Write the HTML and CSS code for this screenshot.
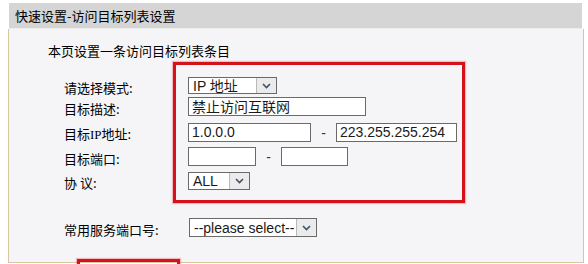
FILE: index.html
```html
<!DOCTYPE html>
<html lang="zh-CN">
<head>
<meta charset="utf-8">
<title>快速设置-访问目标列表设置</title>
<link rel="stylesheet" href="styles.css">
</head>
<body>
<div class="page">
  <div class="title-bar">快速设置-访问目标列表设置</div>
  <div class="panel">
    <div class="intro">本页设置一条访问目标列表条目</div>
    <div class="form">
      <div class="row r1">
        <div class="label">请选择模式:</div>
        <div class="select w-mode"><span class="sel-text">IP 地址</span><span class="arrow"><svg width="9" height="6" viewBox="0 0 9 6"><path d="M1 1 L4.5 4.5 L8 1" fill="none" stroke="#3f5068" stroke-width="1.6"/></svg></span></div>
      </div>
      <div class="row r2">
        <div class="label">目标描述:</div>
        <div class="input w-desc">禁止访问互联网</div>
      </div>
      <div class="row r3">
        <div class="label">目标<span class="ser">IP</span>地址:</div>
        <div class="input w-ip">1.0.0.0</div>
        <span class="dash">-</span>
        <div class="input w-ip2">223.255.255.254</div>
      </div>
      <div class="row r4">
        <div class="label">目标端口:</div>
        <div class="input w-port"></div>
        <span class="dash">-</span>
        <div class="input w-port2"></div>
      </div>
      <div class="row r5">
        <div class="label">协 议:</div>
        <div class="select w-proto"><span class="sel-text">ALL</span><span class="arrow"><svg width="9" height="6" viewBox="0 0 9 6"><path d="M1 1 L4.5 4.5 L8 1" fill="none" stroke="#3f5068" stroke-width="1.6"/></svg></span></div>
      </div>
      <div class="row r6">
        <div class="label">常用服务端口号:</div>
        <div class="select w-svc"><span class="sel-text">--please select--</span><span class="arrow"><svg width="9" height="6" viewBox="0 0 9 6"><path d="M1 1 L4.5 4.5 L8 1" fill="none" stroke="#3f5068" stroke-width="1.6"/></svg></span></div>
      </div>
    </div>
  </div>
</div>
<div class="mark mark-main"></div>
<div class="mark mark-bottom"></div>
</body>
</html>
```

FILE: styles.css
```css
html, body {
  margin: 0;
  padding: 0;
  width: 588px;
  height: 264px;
  overflow: hidden;
  background: #ffffff;
}
body {
  position: relative;
  font-family: "Noto Sans CJK SC", "Liberation Sans", sans-serif;
  color: #000;
}
.page {
  padding: 3px 0 0 8px;
  width: 576px;
}
.title-bar {
  height: 26px;
  line-height: 26px;
  margin-right: 2px;
  margin-left: 1px;
  padding-left: 6px;
  background: #d5d5d5;
  font-size: 13px;
  color: #000;
  border-bottom: 1px solid #ececec;
  box-sizing: border-box;
}
.panel {
  height: 234px;
  box-sizing: border-box;
  background: #f5f5f7;
  border-left: 1px solid #d8c6a2;
  border-right: 1px solid #d8c6a2;
  border-bottom: 1px solid #d8c6a2;
  padding: 14px 0 0 39px;
}
.intro {
  font-size: 13px;
  line-height: 15px;
  height: 15px;
  color: #000;
}
.form {
  padding-left: 16px;
  padding-top: 19px;
}
.row {
  display: flex;
  align-items: center;
}
.r1 { height: 17px; }
.r2 { height: 19px; margin-top: 3px; }
.r3 { height: 19px; margin-top: 7px; }
.r4 { height: 19px; margin-top: 5px; }
.r5 { height: 18px; margin-top: 6px; }
.r6 { height: 19px; margin-top: 28px; }
.label {
  width: 124px;
  flex: none;
  font-size: 13px;
  line-height: 15px;
  padding-top: 3px;
  color: #000;
  white-space: nowrap;
}
.ser {
  font-family: "Liberation Serif", serif;
  font-size: 13px;
}
.input, .select {
  height: 100%;
  box-sizing: border-box;
  border: 1px solid #6a6a6a;
  background: #ffffff;
  font-family: "Liberation Sans", "Noto Sans CJK SC", sans-serif;
  font-size: 14px;
  color: #1a1a1a;
  display: flex;
  align-items: center;
  padding-left: 3px;
  white-space: nowrap;
  overflow: hidden;
  flex: none;
}
.input { line-height: 17px; }
.w-desc { width: 178px; font-family: "Noto Sans CJK SC", sans-serif; font-size: 14px; }
.w-ip { width: 123px; }
.w-ip2 { width: 121px; }
.w-port { width: 68px; }
.w-port2 { width: 67px; }
.dash {
  width: 25px;
  flex: none;
  text-align: center;
  font-family: "Liberation Sans", sans-serif;
  font-size: 14px;
  color: #333;
}
.select {
  padding-left: 0;
  justify-content: space-between;
}
.sel-text {
  padding-left: 4px;
  line-height: 16px;
}
.arrow {
  width: 20px;
  height: 100%;
  flex: none;
  box-sizing: border-box;
  border-left: 1px solid #b9b9b9;
  background: #ebebeb;
  display: flex;
  align-items: center;
  justify-content: center;
}
.w-mode { width: 89px; }
.w-proto { width: 62px; }
.w-svc { width: 128px; margin-left: 1px; }
.mark {
  position: absolute;
  border: 3px solid #d3121b;
  box-shadow: 0 0 1px 1px rgba(240, 80, 80, 0.35);
  box-sizing: border-box;
}
.mark-main {
  left: 173px;
  top: 62px;
  width: 292px;
  height: 141px;
}
.mark-bottom {
  left: 77px;
  top: 259px;
  width: 103px;
  height: 5px;
  border-bottom: 0;
}
```
